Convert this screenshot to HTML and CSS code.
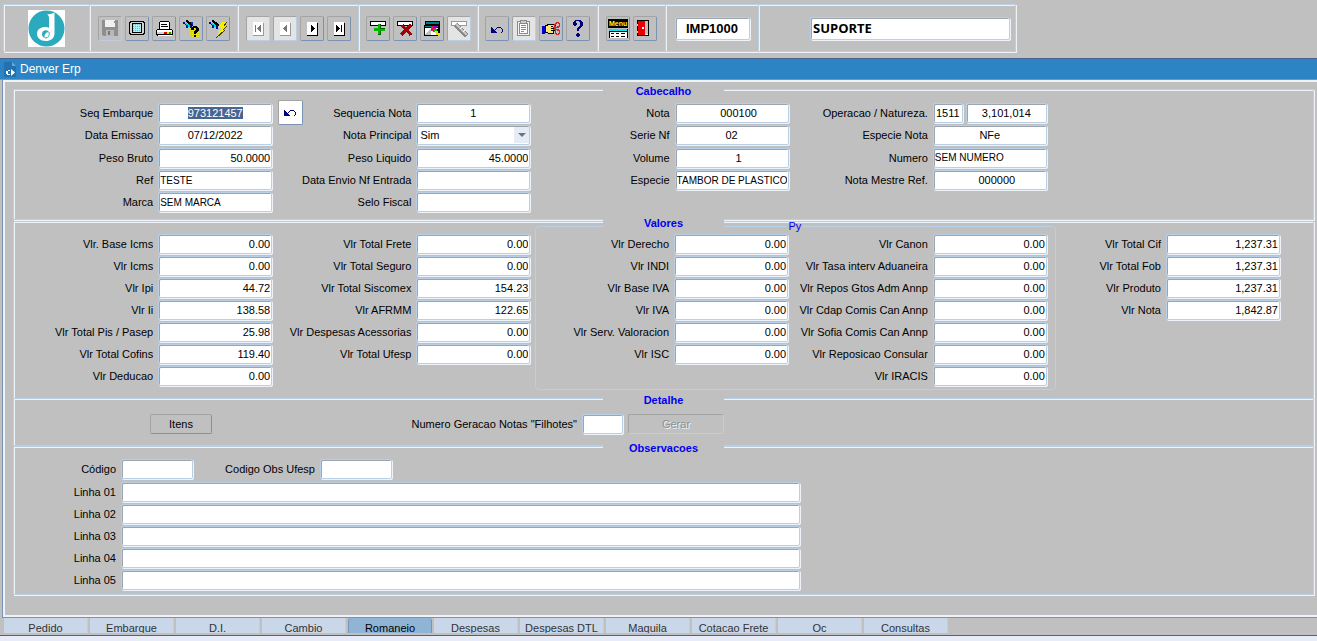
FILE: index.html
```html
<!DOCTYPE html>
<html lang="pt-BR">
<head>
  <meta charset="UTF-8" />
  <title>Denver Erp</title>
  <link rel="stylesheet" href="styles.css">
</head>
<body>

  <!-- TOOLBAR -->
  <header class="toolbar">
    <div class="group">
      <svg class="logo" viewBox="0 0 37 37" aria-label="Denver">
        <rect width="37" height="37" fill="#fff"/>
        <circle cx="18.500" cy="18.500" r="18" fill="#2ba9bd"/>
        <path d="M19 4 C22 5 24 3 26.500 3 V23 C26.500 29 22 31 18 31 C12 31 9 27.500 9 24 C9 19 13 17 17 17 C19 17 20 17 21 18 V8 C21 6 20 5 19 4 Z" fill="#fff"/>
        <path d="M21 22 C19 19 14 20 14 24 C14 26 15 27.500 17 28 C15.500 25 18 22 21 22 Z" fill="#2ba9bd"/>
        <path d="M17 28 C20 28 22 26 21 22" fill="none" stroke="#2ba9bd" stroke-width="1"/>
      </svg>
    </div>

    <div class="group">
      <button class="tool off" aria-label="Salvar" disabled>
        <svg viewBox="0 0 22 22">
          <path d="M4 3h14l1 1v15H4l-1-1V3z" fill="#8f8f8f"/>
          <path d="M6 3h10v7H6z" fill="#f0f0f0"/><path d="M15 4h1v2h-1z" fill="#8f8f8f"/>
          <path d="M7 13h8v6H7z" fill="#b8b8b8"/><path d="M9 14h2v4H9z" fill="#777"/>
        </svg>
      </button>
      <button class="tool" aria-label="Tela">
        <svg viewBox="0 0 22 22">
          <path d="M4 4h14v1h1v12h-1v1H4v-1H3V5h1z" fill="#000"/>
          <path d="M5 5h12v1h1v10h-1v1H5v-1H4V6h1z" fill="#d4d4d4"/>
          <path d="M6 6h10v10H6z" fill="#000"/><path d="M7 7h8v8H7z" fill="#a8f0f4"/>
          <path d="M7 7.500h8M7 9.500h8M7 11.500h8M7 13.500h8" stroke="#30d8e8" stroke-dasharray="1 1"/>
        </svg>
      </button>
      <button class="tool" aria-label="Imprimir">
        <svg viewBox="0 0 22 22">
          <path d="M7 5h9v7h1v1H5v-1h2z" fill="#fff"/><path d="M7 4h9v1H7zM6 5h1v7H6zM16 5h1v7h-1z" fill="#000"/>
          <path d="M8 7h6v1H8zM8 9h7v1H8z" fill="#000"/>
          <path d="M4 12h15v1h1v5h-1v1H4v-1H3v-5h1z" fill="#000"/><path d="M4 13h15v2H4z" fill="#fff"/>
          <path d="M4 15h15v2H4z" fill="#d4d4d4"/><path d="M5 18h14v1H5z" fill="#fff"/>
          <path d="M11 15h3v2h-3z" fill="#e00000"/><path d="M14 15h2v2h-2z" fill="#f0e000"/><path d="M16 15h2v2h-2z" fill="#00a000"/>
        </svg>
      </button>
      <button class="tool" aria-label="Consultar">
        <svg viewBox="0 0 22 22">
          <path d="M3 5h2v1h2v1h3v1h2v4h-2V10H8v1H6V8H5V7H3z" fill="#00108a"/>
          <path d="M6 3h2v1h1v1h2v1h1v1h1v2h-1V8h-2V7H8V6H7V5H6z" fill="#000"/>
          <path d="M5 6h2v1h2v1h1v2H8V8H6V7H5z" fill="#00d8e8"/><path d="M11 5h2v3h-1V7h-1z" fill="#0030d0"/>
          <path d="M10 11.500h10M10 13.500h10M10 15.500h10M10 17.500h10M12 19.500h8" stroke="#eeee20" stroke-dasharray="1 1"/>
          <path d="M13 9h4v1h1v1h1v3h-1v1h-1v1h-1v1h-2v-3h1v-1h1v-2h-2v2h-3v-2h1v-1h1zM14 18h2v2h-2z" fill="#000"/>
        </svg>
      </button>
      <button class="tool" aria-label="Executar consulta">
        <svg viewBox="0 0 22 22">
          <path d="M2 5h2v1h2v1h3v1h2v4H9V10H7v1H5V8H4V7H2z" fill="#00108a"/>
          <path d="M5 3h2v1h1v1h2v1h1v1h1v2h-1V8H9V7H7V6H6V5H5z" fill="#000"/>
          <path d="M4 6h2v1h2v1h1v2H7V8H5V7H4z" fill="#00d8e8"/>
          <path d="M15 5h5l-3 4h3l-4 4h2l-9 8 3-6h-2l4-4h-3z" fill="#f4f000"/>
          <path d="M20 5l-3 4M20 9l-4 4M18 13l-9 8" stroke="#403800" stroke-width="1"/>
        </svg>
      </button>
    </div>

    <div class="group">
      <button class="tool off pale" aria-label="Primeiro" disabled>
        <svg viewBox="0 0 22 22"><path d="M6 6h11v13H6z" fill="#999"/><path d="M6 5h10v13H6z" fill="#fff"/><path d="M8 8h1v7H8zM13 8h1v7h-1v-1h-1v-1h-1v-1h-1v-1h1v-1h1V9h1z" fill="#777"/></svg>
      </button>
      <button class="tool off pale" aria-label="Anterior" disabled>
        <svg viewBox="0 0 22 22"><path d="M6 6h11v13H6z" fill="#999"/><path d="M6 5h10v13H6z" fill="#fff"/><path d="M12 8h1v7h-1v-1h-1v-1h-1v-1H9v-1h1v-1h1V9h1z" fill="#777"/></svg>
      </button>
      <button class="tool" aria-label="Proximo">
        <svg viewBox="0 0 22 22"><path d="M6 6h11v13H6z" fill="#000"/><path d="M6 5h10v13H6z" fill="#fff"/><path d="M10 8h1v1h1v1h1v1h1v1h-1v1h-1v1h-1v1h-1z" fill="#000"/></svg>
      </button>
      <button class="tool" aria-label="Ultimo">
        <svg viewBox="0 0 22 22"><path d="M6 6h11v13H6z" fill="#000"/><path d="M6 5h10v13H6z" fill="#fff"/><path d="M8 8h1v1h1v1h1v1h1v1h-1v1h-1v1H9v1H8zM13 8h1v7h-1z" fill="#000"/></svg>
      </button>
    </div>

    <div class="group">
      <button class="tool" aria-label="Inserir">
        <svg viewBox="0 0 22 22">
          <path d="M3 4h16v5H3z" fill="#000"/><path d="M4 5h14v3H4z" fill="#fff"/>
          <path d="M11 7h3v4h4v3h-4v4h-3v-4H7v-3h4z" fill="#00b800"/><path d="M13 7h1v4h4v1h-5zM13 14h1v4h-3v-1h2z" fill="#006000"/>
        </svg>
      </button>
      <button class="tool" aria-label="Excluir">
        <svg viewBox="0 0 22 22">
          <path d="M3 4h16v5H3z" fill="#000"/><path d="M4 5h14v3H4z" fill="#fff"/>
          <path d="M8 8l9 10M17 8L7 18" stroke="#a00008" stroke-width="3"/>
        </svg>
      </button>
      <button class="tool" aria-label="Filtrar">
        <svg viewBox="0 0 22 22">
          <path d="M4 4h15v13H4z" fill="#000"/><path d="M5 5h13v2H5z" fill="#008080"/>
          <path d="M3 8h15v11H3z" fill="#000"/><path d="M4 9h13v1H4z" fill="#008080"/>
          <path d="M4 11h13v7H4z" fill="#fff"/><path d="M4 18l6-7v7z" fill="#c0c0c0"/>
          <path d="M10 9h3v1h2v2h1v1h-2v2h-2v-1h-2z" fill="#e01060"/><path d="M13 9h3v2h-3z" fill="#9000c0"/>
          <path d="M13 12h3v2h-2v1h-1z" fill="#00c000"/><path d="M15 14h2v2h2v3h-2v-1h-2v-2h-1v-1h1z" fill="#f0e000"/>
          <path d="M9 8h3v1H9zM16 12h1v2h-1zM17 15h1v1h-1z" fill="#000"/>
        </svg>
      </button>
      <button class="tool off pale" aria-label="Limpar filtro" disabled>
        <svg viewBox="0 0 22 22">
          <path d="M3 4h16v5H3z" fill="#999"/><path d="M4 5h14v3H4z" fill="#fff"/>
          <path d="M8 8l11 11" stroke="#8a8a8a" stroke-width="5"/><path d="M8 7l11 11" stroke="#c4c4c4" stroke-width="2"/><path d="M12 12l2 -2M15 15l2 -2" stroke="#fff"/>
        </svg>
      </button>
    </div>

    <div class="group">
      <button class="tool" aria-label="Desfazer">
        <svg viewBox="0 0 22 22"><path d="M5 10h1v1h1v1h1v1h1v1h1v1h1v1H5z" fill="#000080"/><path d="M9 12h1v-1h1v-1h4v1h1v1h1v3h-1v1h-1v-1h1v-3h-1v-1h-4v1h-1v1H9z" fill="#000080"/></svg>
      </button>
      <button class="tool off pale" aria-label="Colar" disabled>
        <svg viewBox="0 0 22 22">
          <path d="M4 4h12v14H4z" fill="#f4f4f4" stroke="#8a8a8a" stroke-width="1"/>
          <path d="M6 6h8v10H6z" fill="#fff" stroke="#8a8a8a" stroke-width="1"/><path d="M7 3h6v3H7z" fill="#ccc" stroke="#8a8a8a" stroke-width="1"/>
          <path d="M8 8h5v1H8zM8 10h5v1H8zM8 12h5v1H8zM8 14h3v1H8z" fill="#8a8a8a"/>
        </svg>
      </button>
      <button class="tool" aria-label="Recortar">
        <svg viewBox="0 0 22 22">
          <path d="M2 9h3v8H2z" fill="#0000d0"/><path d="M5 8h2V7h9v2h-3v2h2v3h-1v3H8v-1H5z" fill="#000"/>
          <path d="M6 9h2V8h7v1h-4v1h3v1h-3v1h3v1h-3v1h2v2H8v-1H6z" fill="#f8e878"/>
          <path d="M15 6h1V5h2v1h1v3h-1v1h-3V9h-1V7h1zM15 12h3v1h1v3h-1v1h-2v-1h-1z" fill="none" stroke="#e02020" stroke-width="1"/>
          <path d="M13 10l6 4M13 13l6-4" stroke="#e02020"/>
        </svg>
      </button>
      <button class="tool" aria-label="Ajuda">
        <svg viewBox="0 0 22 22"><path d="M8 3h6v1h1v1h1v4h-1v1h-1v1h-1v1h-1v2h-2v-3h1v-1h1V9h1V5h-1V4H9v2h1v2H9v1H7V8H6V5h1V4h1zM10 16h2v1h1v2h-1v1h-2v-1H9v-2h1z" fill="#000080"/></svg>
      </button>
    </div>

    <div class="group">
      <button class="tool" aria-label="Menu">
        <svg viewBox="0 0 22 22">
          <path d="M1 2h20v9H1z" fill="#000"/><text class="menu-word" x="2" y="9">Menu</text>
          <path d="M2 12h19v9H2z" fill="#000"/><path d="M2 12h18v2H2z" fill="#00e8f0"/><path d="M3 15h17v6H3z" fill="#fff"/>
          <path d="M4 16h3v1H4zM9 16h3v1H9zM14 16h4v1h-4zM4 19h3v1H4zM9 19h3v1H9zM14 19h4v1h-4z" fill="#000"/>
        </svg>
      </button>
      <button class="tool" aria-label="Sair">
        <svg viewBox="0 0 22 22"><path d="M3 3h12v16H3z" fill="#000"/><path d="M11 4h3v13h-3z" fill="#c0c0c0"/><path d="M10 17h4v1h-4z" fill="#fff"/><path d="M4 4h6l1 1v12l-1 1H4z" fill="#e80000"/><path d="M8 10h2v2H8z" fill="#fff"/><path d="M3 7h1v2H3zM3 14h1v2H3z" fill="#f0e000"/></svg>
      </button>
    </div>

    <div class="group">
      <input class="field program" value="IMP1000" aria-label="Programa" readonly>
    </div>
    <div class="group last">
      <input class="field user" value="SUPORTE" aria-label="Usuario" readonly>
    </div>
  </header>

  <!-- TITLE BAR -->
  <div class="titlebar">
    <svg class="win-icon" viewBox="0 0 12 15">
      <path d="M0 0h8l4 4v11H0z" fill="#2272b2"/><path d="M8 0v4h4z" fill="#66a8dc"/>
      <path d="M2 9h2V8h2v1H4v3h2v1H3v-1H2zM7 7l4 3.500-4 3.500z" fill="#fff"/>
    </svg>
    <h1>Denver Erp</h1>
  </div>

  <!-- FORM -->
  <main class="panel">

    <section class="box cabecalho">
      <h2>Cabecalho</h2>
      <div class="columns">
        <div class="col">
          <label for="seq">Seq Embarque</label><input class="field mid" id="seq" value="973121457">
          <label for="data">Data Emissao</label><input class="field mid" id="data" value="07/12/2022">
          <label for="bruto">Peso Bruto</label><input class="field num" id="bruto" value="50.0000">
          <label for="ref">Ref</label><input class="field txt" id="ref" value="TESTE">
          <label for="marca">Marca</label><input class="field txt" id="marca" value="SEM MARCA">
        </div>
        <div class="col">
          <div class="with-button">
            <button class="undo" aria-label="Desfazer">
              <svg viewBox="0 0 22 22"><path d="M5 8h1v1h1v1h1v1h1v1h1v1h1v1H5z" fill="#000080"/><path d="M9 10h1V9h1V8h4v1h1v1h1v3h-1v1h-1v-1h1v-3h-1V9h-4v1h-1v1H9z" fill="#000080"/></svg>
            </button>
            <label for="seqnota">Sequencia Nota</label>
          </div>
          <input class="field mid" id="seqnota" value="1">
          <label for="principal">Nota Principal</label>
          <div class="combo"><select class="field" id="principal"><option>Sim</option><option>Nao</option></select></div>
          <label for="liquido">Peso Liquido</label><input class="field num" id="liquido" value="45.0000">
          <label for="envio">Data Envio Nf Entrada</label><input class="field" id="envio">
          <label for="selo">Selo Fiscal</label><input class="field" id="selo">
        </div>
        <div class="col">
          <label for="nota">Nota</label><input class="field mid shifted" id="nota" value="000100">
          <label for="serie">Serie Nf</label><input class="field mid" id="serie" value="02">
          <label for="volume">Volume</label><input class="field mid shifted" id="volume" value="1">
          <label for="especie">Especie</label><input class="field txt" id="especie" value="TAMBOR DE PLASTICO">
        </div>
        <div class="col">
          <label for="oper">Operacao / Natureza.</label>
          <div class="pair"><input class="field mid short" id="oper" value="1511"><input class="field mid" value="3,101,014" aria-label="Natureza"></div>
          <label for="espnota">Especie Nota</label><input class="field mid" id="espnota" value="NFe">
          <label for="numero">Numero</label><input class="field txt" id="numero" value="SEM NUMERO">
          <label for="mestre">Nota Mestre Ref.</label><input class="field mid shifted" id="mestre" value="000000">
        </div>
      </div>
    </section>

    <section class="box valores">
      <h2>Valores</h2>
      <div class="columns">
        <div class="col">
          <label for="v1">Vlr. Base Icms</label><input class="field num" id="v1" value="0.00">
          <label for="v2">Vlr Icms</label><input class="field num" id="v2" value="0.00">
          <label for="v3">Vlr Ipi</label><input class="field num" id="v3" value="44.72">
          <label for="v4">Vlr Ii</label><input class="field num" id="v4" value="138.58">
          <label for="v5">Vlr Total Pis / Pasep</label><input class="field num" id="v5" value="25.98">
          <label for="v6">Vlr Total Cofins</label><input class="field num" id="v6" value="119.40">
          <label for="v7">Vlr Deducao</label><input class="field num" id="v7" value="0.00">
        </div>
        <div class="col">
          <label for="t1">Vlr Total Frete</label><input class="field num" id="t1" value="0.00">
          <label for="t2">Vlr Total Seguro</label><input class="field num" id="t2" value="0.00">
          <label for="t3">Vlr Total Siscomex</label><input class="field num" id="t3" value="154.23">
          <label for="t4">Vlr AFRMM</label><input class="field num" id="t4" value="122.65">
          <label for="t5">Vlr Despesas Acessorias</label><input class="field num" id="t5" value="0.00">
          <label for="t6">Vlr Total Ufesp</label><input class="field num" id="t6" value="0.00">
        </div>
        <fieldset class="py">
          <legend>Py</legend>
          <div class="py-columns">
            <div class="col">
              <label for="p1">Vlr Derecho</label><input class="field num" id="p1" value="0.00">
              <label for="p2">Vlr INDI</label><input class="field num" id="p2" value="0.00">
              <label for="p3">Vlr Base IVA</label><input class="field num" id="p3" value="0.00">
              <label for="p4">Vlr IVA</label><input class="field num" id="p4" value="0.00">
              <label for="p5">Vlr Serv. Valoracion</label><input class="field num" id="p5" value="0.00">
              <label for="p6">Vlr ISC</label><input class="field num" id="p6" value="0.00">
            </div>
            <div class="col">
              <label for="c1">Vlr Canon</label><input class="field num" id="c1" value="0.00">
              <label for="c2">Vlr Tasa interv Aduaneira</label><input class="field num" id="c2" value="0.00">
              <label for="c3">Vlr Repos Gtos Adm Annp</label><input class="field num" id="c3" value="0.00">
              <label for="c4">Vlr Cdap Comis Can Annp</label><input class="field num" id="c4" value="0.00">
              <label for="c5">Vlr Sofia Comis Can Annp</label><input class="field num" id="c5" value="0.00">
              <label for="c6">Vlr Reposicao Consular</label><input class="field num" id="c6" value="0.00">
              <label for="c7">Vlr IRACIS</label><input class="field num" id="c7" value="0.00">
            </div>
          </div>
        </fieldset>
        <div class="col">
          <label for="f1">Vlr Total Cif</label><input class="field num" id="f1" value="1,237.31">
          <label for="f2">Vlr Total Fob</label><input class="field num" id="f2" value="1,237.31">
          <label for="f3">Vlr Produto</label><input class="field num" id="f3" value="1,237.31">
          <label for="f4">Vlr Nota</label><input class="field num" id="f4" value="1,842.87">
        </div>
      </div>
    </section>

    <section class="box detalhe">
      <h2>Detalhe</h2>
      <div class="detail-row">
        <button class="btn itens">Itens</button>
        <label for="filhotes">Numero Geracao Notas "Filhotes"</label>
        <input class="field" id="filhotes">
        <button class="btn" disabled>Gerar</button>
      </div>
    </section>

    <section class="box observacoes">
      <h2>Observacoes</h2>
      <div class="obs">
        <label for="codigo">Código</label>
        <div class="codes">
          <input class="field code" id="codigo">
          <label for="ufesp">Codigo Obs Ufesp</label>
          <input class="field code" id="ufesp">
        </div>
        <label for="l1">Linha 01</label><input class="field line" id="l1">
        <label for="l2">Linha 02</label><input class="field line" id="l2">
        <label for="l3">Linha 03</label><input class="field line" id="l3">
        <label for="l4">Linha 04</label><input class="field line" id="l4">
        <label for="l5">Linha 05</label><input class="field line" id="l5">
      </div>
    </section>
  </main>

  <!-- TABS -->
  <nav class="tabs">
    <button>Pedido</button>
    <button>Embarque</button>
    <button>D.I.</button>
    <button>Cambio</button>
    <button class="active">Romaneio</button>
    <button>Despesas</button>
    <button>Despesas DTL</button>
    <button>Maquila</button>
    <button>Cotacao Frete</button>
    <button>Oc</button>
    <button>Consultas</button>
  </nav>
  <footer class="status"></footer>

  <script>
    document.getElementById("seq").select();
  </script>

</body>
</html>
```
FILE: styles.css
```css
* {
  box-sizing: border-box;
}

body {
  margin: 0;
  min-height: 100vh;
  display: flex;
  flex-direction: column;
  background-color: #c0c0c0;
  color: #000;
  font-family: "Liberation Sans", Arial, sans-serif;
  font-size: 11px;
  line-height: 14px;
}

button, input, select {
  font: inherit;
  color: inherit;
  margin: 0;
  padding: 0;
}

/* Toolbar */
.toolbar {
  display: grid;
  grid-template-columns: 86px 148px 121px 119px 120px 68px 93px 257px;
  align-self: flex-start;
  height: 48px;
  margin: 4px 3px 6px;
  border: 1px solid #b8cfe5;
  border-right: none;
  box-shadow: 1px 1px 0 #eef3fa, inset 1px 1px 0 #eef3fa;
}

.group {
  display: flex;
  align-items: center;
  justify-content: center;
  gap: 3px;
  border-right: 1px solid #b8cfe5;
  box-shadow: 1px 0 0 #eef3fa;
}

.last {
  justify-content: flex-end;
  padding-right: 5px;
}

.logo {
  width: 37px;
  height: 37px;
}

.tool {
  width: 24px;
  height: 25px;
  border: 1px solid;
  border-color: #a4a4a4 #7893b4 #7893b4 #a4a4a4;
  border-radius: 2px;
  background-color: #c0c0c0;
}

.tool svg, .undo svg {
  display: block;
  width: 22px;
  height: 22px;
  shape-rendering: crispEdges;
}

.off {
  border-right-color: #b8cfe5;
  border-bottom-color: #b8cfe5;
}

.pale {
  background-color: #e4e4e4;
}

.menu-word {
  font-size: 7px;
  font-weight: bold;
  fill: #ffff00;
}

/* Fields */
.field {
  width: 100%;
  min-width: 0;
  height: 20px;
  padding: 0 2px;
  border: 1px solid #b8cfe5;
  border-radius: 2px;
  outline: none;
  background-color: #fff;
  box-shadow: inset 1px 1px 0 #9aa5b4, 1px 1px 0 #eef3fa;
}

.mid {
  text-align: center;
}

.num {
  padding-right: 1px;
  text-align: right;
}

.txt {
  padding: 0 1px;
  font-size: 10px;
}

.shifted {
  padding-left: 16px;
}

.field::selection {
  background-color: #486490;
  color: #fff;
}

.program {
  width: 75px;
  height: 23px;
  text-align: center;
  font-size: 13px;
  font-weight: bold;
}

.user {
  width: 200px;
  height: 23px;
  font-family: "Open Sans", sans-serif;
  font-size: 13px;
  font-weight: bold;
}

.combo {
  position: relative;
}

.combo select {
  display: block;
  appearance: none;
  padding-left: 3px;
}

.combo::before {
  content: "";
  position: absolute;
  top: 2px;
  right: 1px;
  width: 15px;
  height: 16px;
  background-color: #e6ecf5;
  pointer-events: none;
}

.combo::after {
  content: "";
  position: absolute;
  top: 8px;
  right: 4px;
  border: 4px solid transparent;
  border-top-color: #6a7488;
  border-bottom: none;
  pointer-events: none;
}

/* Title bar */
.titlebar {
  display: flex;
  align-items: center;
  gap: 4px;
  height: 22px;
  padding-left: 4px;
  border-top: 1px solid #4a6490;
  border-bottom: 1px solid #7893b4;
  background-color: #2d84c4;
  color: #fff;
}

.titlebar h1 {
  margin: 0;
  font-size: 12px;
  font-weight: normal;
}

.win-icon {
  width: 12px;
  height: 15px;
}

/* Form panel */
.panel {
  flex: 1;
  margin-left: 2px;
  padding: 9px 3px 0 10px;
  border-left: 1px solid #7893b4;
  border-bottom: 1px solid #7893b4;
  box-shadow: inset 2px 2px 0 #eef3fa, inset 0 -2px 0 #eef3fa;
}

.box {
  display: flow-root;
  border: 1px solid #b8cfe5;
  box-shadow: 1px 1px 0 #eef3fa, inset 1px 1px 0 #eef3fa;
}

.box h2 {
  position: relative;
  z-index: 1;
  width: 121px;
  margin: -6px auto 0;
  background-color: #c0c0c0;
  color: #0000f0;
  font-size: 11px;
  font-weight: bold;
  text-align: center;
}

.cabecalho {
  padding-bottom: 6px;
}

.columns {
  display: grid;
  grid-template-columns: repeat(4, minmax(0, 258fr)) minmax(0, 233fr);
  margin-right: 33px;
  padding-top: 2px;
}

.col {
  display: grid;
  grid-template-columns: 1fr 114px;
  grid-auto-rows: 22px;
  align-content: start;
  align-items: center;
  column-gap: 5px;
}

.cabecalho .col {
  grid-template-rows: 23px 22px 23px 22px;
  padding-top: 1px;
}

.col label {
  text-align: right;
  white-space: nowrap;
}

.with-button {
  display: flex;
  align-items: center;
  justify-content: space-between;
  height: 22px;
  padding-left: 6px;
}

.undo {
  width: 25px;
  height: 25px;
  border: 1px solid;
  border-color: #a4a4a4 #7893b4 #7893b4 #a4a4a4;
  border-radius: 2px;
  background-color: #fff;
}

.pair {
  display: flex;
  gap: 3px;
}

.pair .short {
  flex: 0 0 30px;
}

.valores {
  margin-top: 1px;
  padding-bottom: 8px;
}

.valores .columns {
  padding-top: 3px;
}

.py {
  grid-column: span 2;
  min-width: 0;
  margin: -14px -9px 0 5px;
  padding: 0 8px 2px 0;
  border: 1px solid #b8cfe5;
  border-radius: 4px;
}

.py legend {
  margin-left: 49%;
  padding: 0 2px;
  color: #0000f0;
}

.py-columns {
  display: grid;
  grid-template-columns: 251fr 258fr;
}

.detalhe {
  margin-top: -1px;
  padding-bottom: 11px;
}

.detail-row {
  display: grid;
  grid-template-columns: 198px 360px 41px 96px;
  align-items: center;
  column-gap: 5px;
  padding-top: 7px;
}

.detail-row label {
  text-align: right;
}

.btn {
  height: 20px;
  border: 1px solid;
  border-color: #a4a4a4 #7893b4 #7893b4 #a4a4a4;
  border-radius: 2px;
  background-color: #c0c0c0;
}

.btn:disabled {
  border-right-color: #b8cfe5;
  border-bottom-color: #b8cfe5;
  color: #8f8f8f;
  text-shadow: 1px 1px 0 #eef3fa;
}

.itens {
  justify-self: end;
  width: 62px;
}

.obs {
  display: grid;
  grid-template-columns: 102px 1fr;
  grid-template-rows: 24px;
  grid-auto-rows: 22px;
  align-items: center;
  column-gap: 5px;
  padding: 2px 0 3px;
}

.obs label {
  text-align: right;
}

.codes {
  display: flex;
  align-items: center;
  gap: 5px;
}

.codes label {
  width: 117px;
}

.code {
  width: 72px;
}

.line {
  width: 57%;
}

/* Tabs */
.tabs {
  display: flex;
  gap: 2px;
  height: 17px;
  padding: 0 0 2px 4px;
}

.tabs button {
  width: 84px;
  height: 15px;
  padding-top: 4px;
  border: none;
  border-right: 1px solid #b8cfe5;
  background-color: #c9d7e9;
  color: #333;
  line-height: 13px;
  overflow: hidden;
}

.tabs .active {
  border-left: 1px solid #7893b4;
  border-right-color: #7893b4;
  border-radius: 3px 3px 0 0;
  background-color: #8fb4d6;
  color: #000;
}

.status {
  height: 6px;
  border-top: 1px solid #4a6490;
  background-color: #e8ecf8;
}
```
